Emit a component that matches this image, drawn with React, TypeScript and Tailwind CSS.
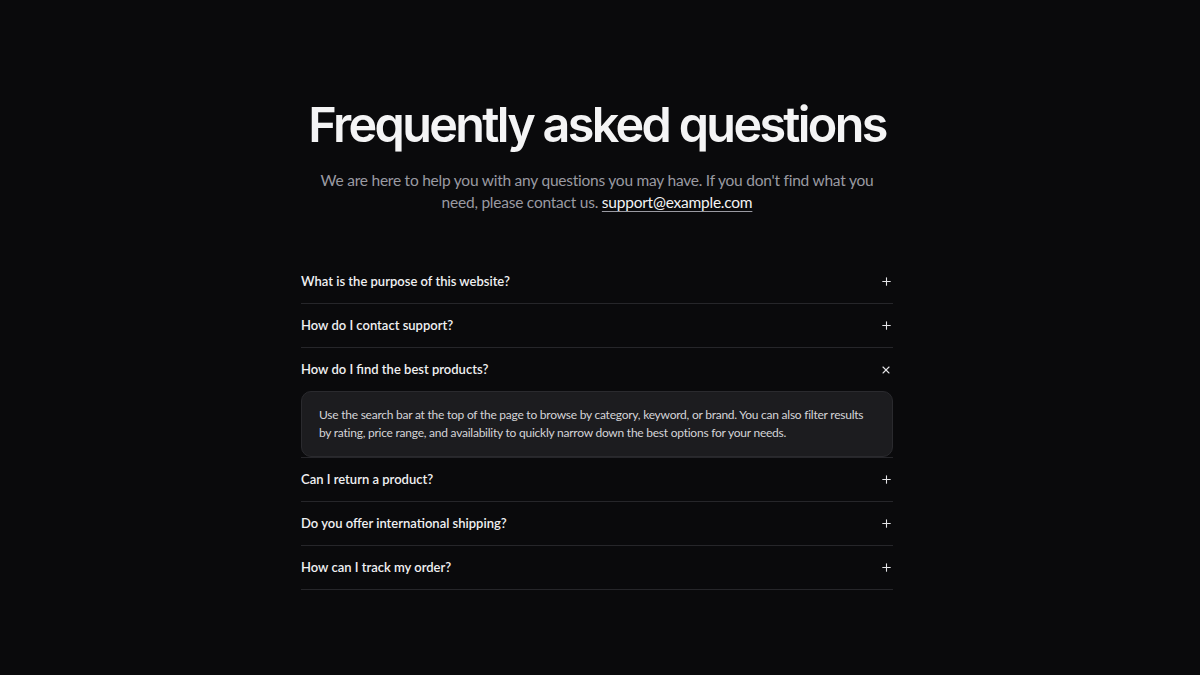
import React, { useState } from 'react';
import { Plus, X } from 'lucide-react';

const faqs = [
  { q: 'What is the purpose of this website?', a: 'This website helps you discover, compare and buy products from trusted sellers in one place.' },
  { q: 'How do I contact support?', a: 'You can reach our team any time by emailing support@example.com.' },
  {
    q: 'How do I find the best products?',
    a: 'Use the search bar at the top of the page to browse by category, keyword, or brand. You can also filter results by rating, price range, and availability to quickly narrow down the best options for your needs.',
  },
  { q: 'Can I return a product?', a: 'Yes, most products can be returned within 30 days of delivery.' },
  { q: 'Do you offer international shipping?', a: 'We ship to most countries worldwide. Rates are shown at checkout.' },
  { q: 'How can I track my order?', a: 'Open your order history and select the order to see its tracking details.' },
];

export default function App() {
  const [open, setOpen] = useState<number | null>(2);

  return (
    <div
      className="min-h-[675px] w-full bg-[#0a0a0c] text-white flex flex-col items-center pt-[100px] pr-[6px]"
      style={{ fontFamily: 'Lato, "Noto Sans", sans-serif' }}
    >
      <h1
        className="text-[48.5px] leading-[50px] font-semibold tracking-[-0.055em] text-[#f4f4f5]"
        style={{ fontFamily: 'Inter, "Noto Sans", sans-serif' }}
      >
        Frequently asked questions
      </h1>
      <p className="mt-[19px] max-w-[560px] text-center text-[15.5px] leading-[22px] tracking-[-0.015em] text-[#9a9aa2]">
        We are here to help you with any questions you may have. If you don't find what you need, please contact us.{' '}
        <a href="#" className="text-[#f4f4f5] underline underline-offset-[3px] decoration-[#9a9aa2]">
          support@example.com
        </a>
      </p>

      {/* FAQ list */}
      <div className="mt-[47px] w-[592px]">
        {faqs.map((item, i) => {
          const isOpen = open === i;
          return (
            <div key={item.q} className="border-b border-[#26262a]">
              <button
                onClick={() => setOpen(isOpen ? null : i)}
                className="w-full h-[43px] flex items-center justify-between text-left"
              >
                <span className="text-[13px] font-semibold text-[#f0f0f2]">{item.q}</span>
                {isOpen ? (
                  <X className="w-[12px] h-[12px] mr-[1px] text-[#e4e4e7]" strokeWidth={2.2} />
                ) : (
                  <Plus className="w-[13px] h-[13px] text-[#e4e4e7]" strokeWidth={2} />
                )}
              </button>
              {isOpen && (
                <div className="rounded-[10px] border border-[#2a2a2e] bg-[#1c1c1f] px-[17px] py-[14px] text-[12px] leading-[18px] tracking-[-0.02em] text-[#d4d4d8]">
                  {item.a}
                </div>
              )}
            </div>
          );
        })}
      </div>
    </div>
  );
}
